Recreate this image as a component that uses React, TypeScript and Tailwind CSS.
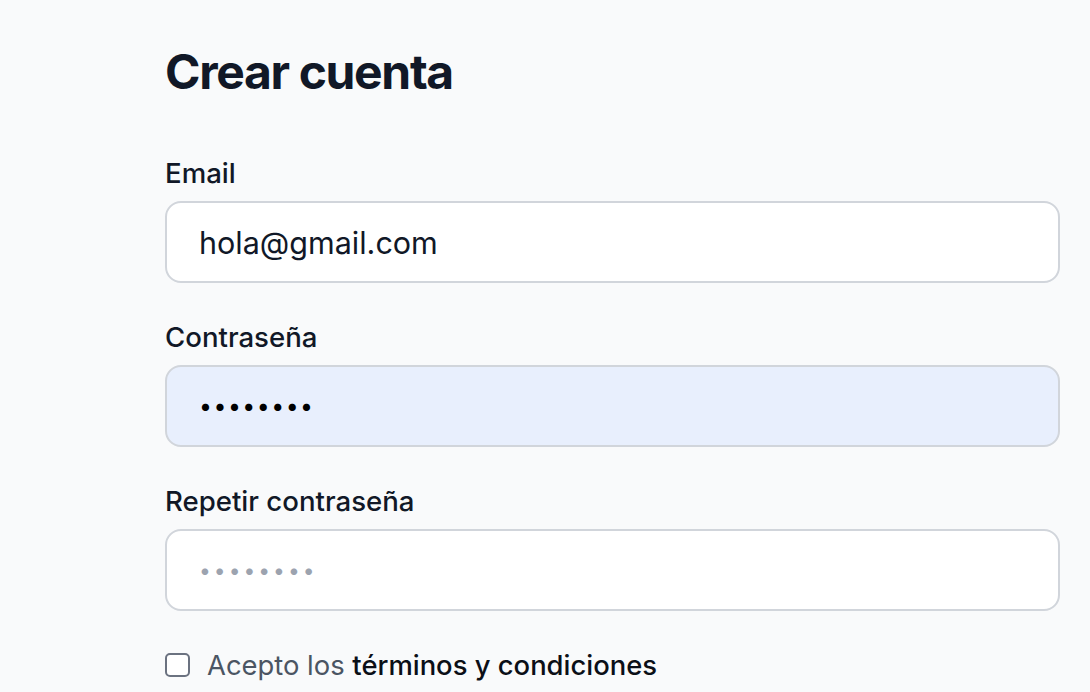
import { useState } from "react";

const fieldLabel = "block h-[40px] text-[27.6px] leading-[40px] font-medium text-[#111827]";
const fieldInput =
  "block w-full h-[82px] rounded-[16px] border-2 border-[#d1d5db] px-[32px] outline-none placeholder:text-[#9ca3af]";

export default function App() {
  const [email, setEmail] = useState("hola@gmail.com");
  const [pass, setPass] = useState("12345678");
  const [repeat, setRepeat] = useState("");
  const [accepted, setAccepted] = useState(false);

  return (
    <div
      className="min-h-[692px] w-full bg-[#f9fafb] overflow-hidden"
      style={{ fontFamily: "Inter, 'Noto Sans', sans-serif" }}
    >
      <div className="w-[895px] ml-[165px] pt-[48px]">
        <h1 className="text-[48px] leading-[48px] font-bold tracking-[-0.028em] text-[#111827]">
          Crear cuenta
        </h1>

        <form className="mt-[57px] flex flex-col gap-[34px]">
          <div className="flex flex-col gap-[8px]">
            <label className={fieldLabel}>Email</label>
            <input
              type="email"
              value={email}
              onChange={(e) => setEmail(e.target.value)}
              className={`${fieldInput} bg-white text-[30.5px] text-[#111827]`}
            />
          </div>

          <div className="flex flex-col gap-[8px]">
            <label className={fieldLabel}>Contraseña</label>
            <input
              type="password"
              value={pass}
              onChange={(e) => setPass(e.target.value)}
              className={`${fieldInput} bg-[#e8effd] text-[23px] tracking-[1.5px] text-black`}
            />
          </div>

          <div className="flex flex-col gap-[8px]">
            <label className={fieldLabel}>Repetir contraseña</label>
            <input
              type="password"
              value={repeat}
              placeholder="••••••••"
              onChange={(e) => setRepeat(e.target.value)}
              className={`${fieldInput} bg-white text-[21px] tracking-[3px] text-black`}
            />
          </div>

          <label className="flex items-center gap-[17px] h-[40px] text-[27.4px] leading-[40px]">
            <input
              type="checkbox"
              checked={accepted}
              onChange={(e) => setAccepted(e.target.checked)}
              className="appearance-none w-[25px] h-[24px] rounded-[5px] border-2 border-[#6b7280] bg-white"
            />
            <span className="text-[#4b5563]">
              Acepto los <span className="font-medium text-[#0b0f17]">términos y condiciones</span>
            </span>
          </label>
        </form>
      </div>
    </div>
  );
}
